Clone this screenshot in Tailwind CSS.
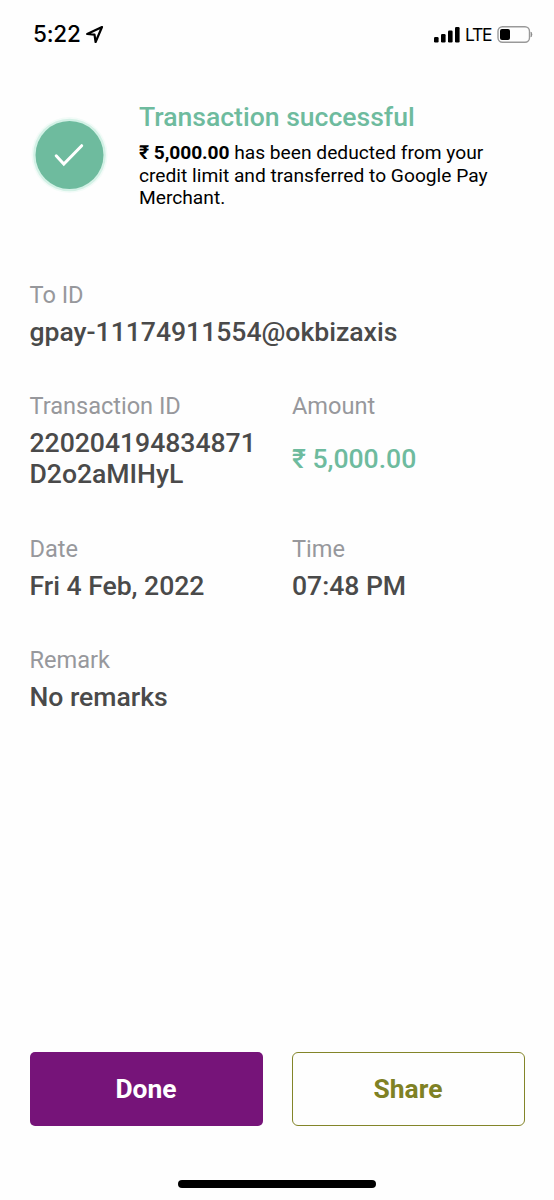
<!DOCTYPE html>
<html lang="en">
<head>
<meta charset="utf-8">
<title>Transaction successful</title>
<script src="https://cdn.jsdelivr.net/npm/@tailwindcss/browser@4"></script>
</head>
<body class="bg-white">
<div class="w-[554px] h-[1200px] flex flex-col overflow-hidden bg-[#fefefe] font-['Roboto','Noto_Sans',sans-serif] text-[#4a4a4a]">
  <header class="h-[68px] shrink-0 flex items-center justify-between pl-[33px] pr-[21px] text-black font-['Inter',sans-serif]">
    <div class="flex items-center gap-[4px]">
      <span class="text-[22.500px] leading-[28px] font-medium tracking-[-0.2px]">5:22</span>
      <svg class="w-[19px] h-[19px]" viewBox="0 0 19 19" fill="none" stroke="currentColor" stroke-width="2.200" stroke-linejoin="round"><path d="M17 2 L2.200 9 L9.500 9.700 L10.600 17 Z"/></svg>
    </div>
    <div class="flex items-center">
      <svg class="w-[26px] h-[17px]" viewBox="0 0 26 17" fill="currentColor"><rect x="0" y="11" width="4.600" height="5.500" rx="1.200"/><rect x="7" y="8" width="4.600" height="8.500" rx="1.200"/><rect x="14" y="4.500" width="4.600" height="12" rx="1.200"/><rect x="21" y="1" width="4.600" height="15.500" rx="1.200"/></svg>
      <span class="ml-[5px] w-[27px] pt-px text-[17.500px] leading-[24px] tracking-[-1.300px]">LTE</span>
      <svg class="ml-[5px] w-[36px] h-[17px]" viewBox="0 0 36 17"><rect x="1" y=".8" width="31.500" height="15.400" rx="4.500" fill="none" stroke="#999" stroke-width="1.400"/><rect x="3" y="3" width="10" height="11" rx="2" fill="#000"/><path d="M34 6 Q36 8.500 34 11Z" fill="#888" stroke="#888" stroke-width=".6"/></svg>
    </div>
  </header>
  <section class="mt-[33px] h-[180px] shrink-0 flex items-start">
    <svg class="mt-[16px] ml-[31px] w-[77px] h-[77px] shrink-0" viewBox="0 0 77 77"><circle cx="38.500" cy="38" r="38" fill="#f3fbf8"/><circle cx="38.500" cy="38" r="36.300" fill="#d3f1e6"/><circle cx="38.500" cy="38" r="34" fill="#6ebb9e"/><path d="M25.200 38.800 L32.800 47 L50.700 28.700" fill="none" stroke="#fff" stroke-width="3" stroke-linecap="round" stroke-linejoin="miter"/></svg>
    <div class="ml-[31px]">
      <h1 class="text-[26.600px] leading-[32px] font-medium text-[#6ebb9e] tracking-[-0.02px] whitespace-nowrap">Transaction successful</h1>
      <p class="mt-[9px] text-[19.200px] leading-[22.500px] text-black whitespace-nowrap"><b class="font-bold tracking-[-0.080px]">₹ 5,000.00</b> has been deducted from your<br>credit limit and transferred to Google Pay<br>Merchant.</p>
    </div>
  </section>
  <main class="flex-1 flex flex-col px-[29.500px] gap-[45.400px] text-[26.600px] leading-[31px] font-medium tracking-[-0.030px] whitespace-nowrap">
    <div class="flex flex-col gap-[7px]">
      <div class="text-[23.600px] leading-[28px] font-normal text-[#97989c]">To ID</div>
      <div>gpay-11174911554@okbizaxis</div>
    </div>
    <div class="grid grid-cols-[262.500px_1fr]">
      <div class="flex flex-col gap-[7px]">
        <div class="text-[23.600px] leading-[28px] font-normal text-[#97989c]">Transaction ID</div>
        <div>220204194834871<br>D2o2aMIHyL</div>
      </div>
      <div class="flex flex-col gap-[7px]">
        <div class="text-[23.600px] leading-[28px] font-normal text-[#97989c]">Amount</div>
        <div class="flex-1 flex items-center text-[#6ebb9e]">₹ 5,000.00</div>
      </div>
    </div>
    <div class="grid grid-cols-[262.500px_1fr]">
      <div class="flex flex-col gap-[7px]">
        <div class="text-[23.600px] leading-[28px] font-normal text-[#97989c]">Date</div>
        <div>Fri 4 Feb, 2022</div>
      </div>
      <div class="flex flex-col gap-[7px]">
        <div class="text-[23.600px] leading-[28px] font-normal text-[#97989c]">Time</div>
        <div>07:48 PM</div>
      </div>
    </div>
    <div class="flex flex-col gap-[7px]">
      <div class="text-[23.600px] leading-[28px] font-normal text-[#97989c]">Remark</div>
      <div>No remarks</div>
    </div>
  </main>
  <footer class="h-[148px] shrink-0 flex flex-col items-center">
    <div class="flex gap-[29px] text-[26.400px] font-bold">
      <button class="w-[233px] h-[74px] pt-[2px] rounded-[5px] bg-[#761479] text-white">Done</button>
      <button class="w-[233px] h-[74px] pt-[2px] rounded-[6px] border-[1.500px] border-[#838529] text-[#7f8124]">Share</button>
    </div>
    <div class="mt-[54px] w-[198px] h-[8px] rounded-full bg-black"></div>
  </footer>
</div>
</body>
</html>
